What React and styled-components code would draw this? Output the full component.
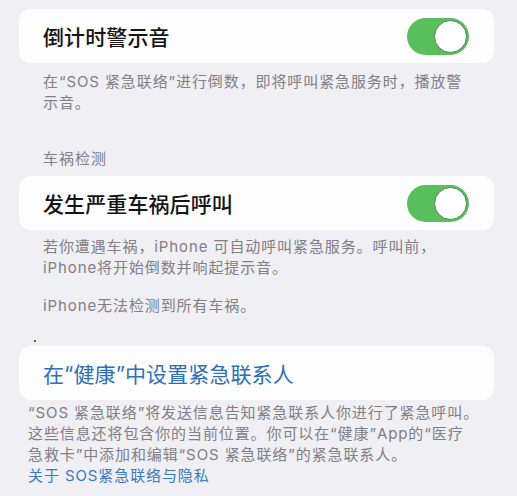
import React from "react";
import styled, { createGlobalStyle } from "styled-components";

const GlobalStyle = createGlobalStyle`
  html, body {
    margin: 0;
    padding: 0;
    background: #efeff4;
  }
  body {
    font-family: "Inter", "Noto Sans CJK SC", sans-serif;
    -webkit-font-smoothing: antialiased;
  }
`;

const Page = styled.div`
  width: 517px;
  height: 496px;
  box-sizing: border-box;
  padding: 9px 23px 0 19px;
  background: #efeff4;
  overflow: hidden;
`;

const Card = styled.div`
  display: flex;
  align-items: center;
  justify-content: space-between;
  box-sizing: border-box;
  height: 54px;
  padding: 0 25px 0 24px;
  background: #fdfdfe;
  border-radius: 12px;
  margin-top: ${(p) => p.$top || 0}px;
`;

const Title = styled.div`
  font-size: 21px;
  font-weight: 500;
  color: #141416;
  letter-spacing: 0.1px;
`;

const LinkTitle = styled(Title)`
  font-weight: 400;
  color: #2f6fb6;
`;

const Footer = styled.div`
  margin-top: ${(p) => p.$top || 0}px;
  padding-left: ${(p) => (p.$wide ? 9 : 24)}px;
  font-size: 15px;
  line-height: 21px;
  letter-spacing: 0.9px;
  color: #808086;
  white-space: nowrap;
`;

const Para = styled.p`
  margin: 0;
  & + & {
    margin-top: 17px;
  }
`;

const SectionHeader = styled.div`
  margin-top: 35px;
  padding-left: 24px;
  font-size: 15px;
  line-height: 21px;
  letter-spacing: 1px;
  color: #808086;
`;

const Dot = styled.div`
  width: 2px;
  height: 2px;
  border-radius: 1px;
  background: #2a2a2e;
  margin: 24px 0 4px 15px;
`;

const Link = styled.span`
  color: #3a78c4;
`;

const Track = styled.div`
  display: flex;
  align-items: center;
  justify-content: flex-end;
  box-sizing: border-box;
  width: 62px;
  height: 37px;
  padding: 0 2px;
  border-radius: 19px;
  background: #58bf5c;
`;

const Knob = styled.div`
  box-sizing: border-box;
  width: 33px;
  height: 33px;
  border-radius: 50%;
  background: #ffffff;
  border: 1.5px solid #4d7f56;
`;

const Toggle = () => (
  <Track>
    <Knob />
  </Track>
);

export default function App() {
  return (
    <>
      <GlobalStyle />
      <Page>
        <Card>
          <Title>倒计时警示音</Title>
          <Toggle />
        </Card>
        <Footer $top={8}>
          在“SOS 紧急联络”进行倒数，即将呼叫紧急服务时，播放警
          <br />
          示音。
        </Footer>

        <SectionHeader>车祸检测</SectionHeader>
        <Card $top={7}>
          <Title>发生严重车祸后呼叫</Title>
          <Toggle />
        </Card>
        <Footer $top={6}>
          <Para>
            若你遭遇车祸，iPhone 可自动呼叫紧急服务。呼叫前，
            <br />
            iPhone将开始倒数并响起提示音。
          </Para>
          <Para>iPhone无法检测到所有车祸。</Para>
        </Footer>

        <Dot />
        <Card>
          <LinkTitle>在“健康”中设置紧急联系人</LinkTitle>
        </Card>
        <Footer $top={2} $wide>
          “SOS 紧急联络”将发送信息告知紧急联系人你进行了紧急呼叫。
          <br />
          这些信息还将包含你的当前位置。你可以在“健康”App的“医疗
          <br />
          急救卡”中添加和编辑“SOS 紧急联络”的紧急联系人。
          <br />
          <Link>关于 SOS紧急联络与隐私</Link>
        </Footer>
      </Page>
    </>
  );
}
